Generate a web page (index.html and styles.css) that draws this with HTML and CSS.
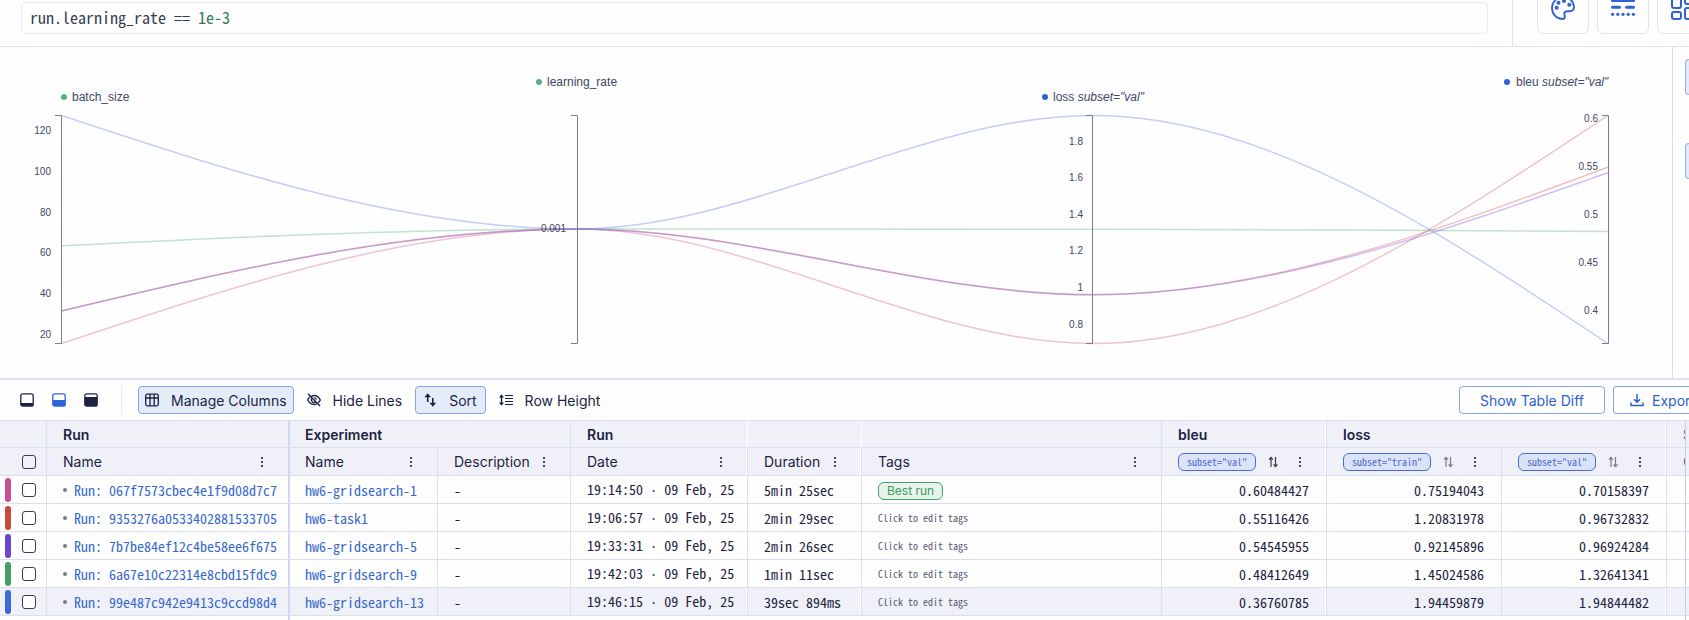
FILE: index.html
```html
<!DOCTYPE html>
<html lang="en">
<head>
<meta charset="utf-8">
<title>Metrics Explorer</title>
<link rel="stylesheet" href="styles.css">
</head>
<body>
<svg class="sprite" aria-hidden="true">
  <symbol id="dots" viewBox="0 0 4 12"><circle cx="2" cy="2" r="1.1"/><circle cx="2" cy="6" r="1.1"/><circle cx="2" cy="10" r="1.1"/></symbol>
  <symbol id="order" viewBox="0 0 10 12"><path d="M3 11V1.5M1 3.700 3 1.500 5 3.700M7.500 1v9.500M5.500 8.300l2 2.200 2-2.200" fill="none" stroke="currentColor" stroke-width="1.2"/></symbol>
</svg>
<main class="explorer">
  <header class="query">
    <div class="query-box"><div class="editor"><span>run.learning_rate == </span><span class="number">1e-3</span></div></div>
    <nav class="modes" aria-label="View controls">
      <button class="mode" aria-label="Colors"><svg viewBox="0 0 24 24" width="24" height="24" fill="none" stroke="currentColor" stroke-width="1.9"><path d="M12 1C5.800 1 1 5.800 1 12s5 11 10.500 11c1.500 0 2.300-1.100 2.300-2.300 0-1.200-.5-1.800-.5-2.900 0-1.600 1.200-2.600 2.900-2.600h2.300c2.600 0 4.500-1.600 4.500-4.200C23 5 18 1 12 1z"/><g fill="currentColor" stroke="none"><circle cx="5.700" cy="11.700" r="2"/><circle cx="7.500" cy="6.700" r="2"/><circle cx="13" cy="5" r="2"/><circle cx="18.300" cy="8.700" r="2"/></g></svg></button>
      <button class="mode" aria-label="Stroke styles"><svg viewBox="0 0 24 24" width="24" height="24" fill="currentColor"><rect x="0" y="1" width="24" height="5" rx="1"/><rect x="0" y="9.800" width="10" height="3" rx="1.500"/><rect x="14" y="9.800" width="10" height="3" rx="1.500"/><circle cx="1.600" cy="18.300" r="1.600"/><circle cx="6.800" cy="18.300" r="1.600"/><circle cx="12" cy="18.300" r="1.600"/><circle cx="17.200" cy="18.300" r="1.600"/><circle cx="22.400" cy="18.300" r="1.600"/></svg></button>
      <button class="mode" aria-label="Facets"><svg viewBox="0 0 24 24" width="24" height="24" fill="none" stroke="currentColor" stroke-width="2"><rect x="1" y="1" width="9" height="11" rx="2"/><rect x="1" y="16" width="9" height="7" rx="2"/><rect x="14" y="1" width="9" height="7" rx="2"/><rect x="14" y="12" width="9" height="11" rx="2"/></svg></button>
    </nav>
  </header>

  <section class="visual">
    <div class="plot">
      <svg class="chart" viewBox="0 47 1672 331" role="img" aria-label="Parallel coordinates">
        <g class="lines">
          <path class="pink" d="M61.500 343.500C233.300 286.250 405.200 229 577 229C748.900 229 920.900 343.500 1093 343.500C1264.700 343.500 1436.300 229.500 1608 115.500"/>
          <path class="red" d="M61.500 310.900C233.300 270 405.200 229 577 229C748.900 229 920.900 294.900 1093 294.900C1264.700 294.900 1436.300 231 1608 167.100"/>
          <path class="green" d="M61.500 245.800C233.300 237.400 405.200 229 577 229C748.900 229 920.900 229.200 1093 229.200C1264.700 229.400 1436.300 230.400 1608 231.500"/>
          <path class="violet" d="M61.500 310.900C233.300 270 405.200 229 577 229C748.900 229 920.900 294.600 1093 294.600C1264.700 294.600 1436.300 233.600 1608 172.600"/>
          <path class="blue" d="M61.500 115.500C233.300 172.250 405.200 229 577 229C748.900 229 920.900 115.500 1093 115.500C1264.700 115.500 1436.300 229.500 1608 343.500"/>
        </g>
        <g class="axes">
          <path d="M55 115.500h6.500v228H55"/><path d="M571 115.500h6.500v228H571"/><path d="M1086 115.500h6.500v228H1086"/><path d="M1602 115.500h6.500v228H1602"/>
        </g>
        <g class="ticks">
          <text x="51" y="134">120</text><text x="51" y="175">100</text><text x="51" y="216">80</text><text x="51" y="256">60</text><text x="51" y="297">40</text><text x="51" y="338">20</text>
          <text x="566" y="232">0.001</text>
          <text x="1083" y="145">1.8</text><text x="1083" y="181">1.6</text><text x="1083" y="218">1.4</text><text x="1083" y="254">1.2</text><text x="1083" y="291">1</text><text x="1083" y="328">0.8</text>
          <text x="1598" y="122">0.6</text><text x="1598" y="170">0.55</text><text x="1598" y="218">0.5</text><text x="1598" y="266">0.45</text><text x="1598" y="314">0.4</text>
        </g>
        <g class="names">
          <circle class="param" cx="64" cy="97" r="3"/><text x="72" y="101">batch_size</text>
          <circle class="param" cx="539" cy="82" r="3"/><text x="547" y="86">learning_rate</text>
          <circle class="metric" cx="1045" cy="97" r="3"/><text x="1053" y="101">loss <tspan class="context">subset="val"</tspan></text>
          <circle class="metric" cx="1507" cy="82" r="3"/><text x="1516" y="86">bleu <tspan class="context">subset="val"</tspan></text>
        </g>
      </svg>
    </div>
    <aside class="side"><button class="side-tab" aria-label="Curve interpolation"></button><button class="side-tab" aria-label="Color indicator"></button></aside>
  </section>

  <section class="panel">
    <div class="toolbar">
      <div class="sizes">
        <button class="size" aria-label="Small table"><svg viewBox="0 0 14 14" width="14" height="14"><rect x=".8" y=".8" width="12.400" height="12.400" rx="2" fill="none" stroke="currentColor" stroke-width="1.300"/><path d="M1 10h12v2l-1 1H2l-1-1z" fill="currentColor"/></svg></button>
        <button class="size current" aria-label="Medium table"><svg viewBox="0 0 14 14" width="14" height="14"><rect x=".8" y=".8" width="12.400" height="12.400" rx="2" fill="none" stroke="currentColor" stroke-width="1.300"/><path d="M1 7h12v5l-1 1H2l-1-1z" fill="currentColor"/></svg></button>
        <button class="size" aria-label="Large table"><svg viewBox="0 0 14 14" width="14" height="14"><rect x=".8" y=".8" width="12.400" height="12.400" rx="2" fill="none" stroke="currentColor" stroke-width="1.300"/><path d="M1 4h12v8l-1 1H2l-1-1z" fill="currentColor"/></svg></button>
      </div>
      <div class="tools">
        <button class="tool active"><svg viewBox="0 0 14 14" width="14" height="14" fill="none" stroke="currentColor" stroke-width="1.300"><rect x=".7" y="1.200" width="12.600" height="11.600" rx="1.500"/><path d="M.7 5h12.600M5 1.200v11.600M9.200 1.200v11.600"/></svg>Manage Columns</button>
        <button class="tool"><svg viewBox="0 0 14 14" width="14" height="14" fill="none" stroke="currentColor" stroke-width="1.400"><path d="M1 .8 13 13M4.500 3C5.300 2.600 6.100 2.500 7 2.500c3 0 5 2 6.300 4.500-.5 1-1.200 1.900-2 2.600M2.900 4C2 4.800 1.200 5.800.7 7 2 9.500 4 11.500 7 11.500c1 0 2-.3 2.800-.7M5.200 5.300a2.400 2.400 0 0 0 3.500 3.400M7.300 4.600a2.400 2.400 0 0 1 2 2.200"/></svg>Hide Lines</button>
        <button class="tool active sort"><svg viewBox="0 0 14 14" width="14" height="14" fill="currentColor"><path d="M4.700.2 8 4.200H5.500V9H3.900V4.200H1.400zM9.800 13.800 6.500 9.800H9V5h1.600v4.800h2.500z"/></svg>Sort</button>
        <button class="tool"><svg viewBox="0 0 14 14" width="14" height="14"><path d="M2.500 1.200 5 4.500H3.200v5H5l-2.500 3.300L0 9.500h1.800v-5H0z" fill="currentColor"/><path d="M6 2.500h8M6 5.500h8M6 8.500h8M6 11.500h8" fill="none" stroke="currentColor" stroke-width="1.200"/></svg>Row Height</button>
      </div>
      <div class="actions">
        <button class="action diff">Show Table Diff</button>
        <button class="action export"><svg viewBox="0 0 14 14" width="14" height="14" fill="none" stroke="currentColor" stroke-width="1.500"><path d="M7 1v8M4 6.200l3 3 3-3M1 9.500v3h12v-3"/></svg>Export</button>
      </div>
    </div>

    <table class="runs">
      <colgroup><col class="c-check"><col class="c-run"><col class="c-exp"><col class="c-desc"><col class="c-date"><col class="c-dur"><col><col class="c-metric"><col class="c-train"><col class="c-metric"><col class="c-next"><col class="c-pin"></colgroup>
      <thead>
        <tr class="groups"><th></th><th class="pinned">Run</th><th colspan="2" class="first">Experiment</th><th class="open">Run</th><th class="open"></th><th></th><th class="gap">bleu</th><th colspan="2" class="gap">loss</th><th>S</th><th class="edge"></th></tr>
        <tr class="fields">
          <th><input type="checkbox" aria-label="Select all runs"></th>
          <th class="pinned"><div class="field"><span>Name</span><button class="more" aria-label="Name menu"><svg><use href="#dots"/></svg></button></div></th>
          <th class="first"><div class="field"><span>Name</span><button class="more" aria-label="Experiment menu"><svg><use href="#dots"/></svg></button></div></th>
          <th><div class="field"><span>Description</span><button class="more" aria-label="Description menu"><svg><use href="#dots"/></svg></button></div></th>
          <th class="gap"><div class="field"><span>Date</span><button class="more" aria-label="Date menu"><svg><use href="#dots"/></svg></button></div></th>
          <th class="gap"><div class="field"><span>Duration</span><button class="more" aria-label="Duration menu"><svg><use href="#dots"/></svg></button></div></th>
          <th><div class="field"><span>Tags</span><button class="more" aria-label="Tags menu"><svg><use href="#dots"/></svg></button></div></th>
          <th class="gap"><div class="field"><span class="chip">subset="val"</span><button class="order on" aria-label="Sort bleu"><svg><use href="#order"/></svg></button><button class="more" aria-label="bleu menu"><svg><use href="#dots"/></svg></button></div></th>
          <th><div class="field"><span class="chip">subset="train"</span><button class="order" aria-label="Sort train loss"><svg><use href="#order"/></svg></button><button class="more" aria-label="Train loss menu"><svg><use href="#dots"/></svg></button></div></th>
          <th class="gap"><div class="field"><span class="chip">subset="val"</span><button class="order" aria-label="Sort val loss"><svg><use href="#order"/></svg></button><button class="more" aria-label="Val loss menu"><svg><use href="#dots"/></svg></button></div></th>
          <th>C</th><th class="edge"></th>
        </tr>
      </thead>
      <tbody>
        <tr><td class="pick pink"><input type="checkbox" aria-label="Select run 067f"></td><td class="pinned"><a class="run" href="#">Run: 067f7573cbec4e1f9d08d7c7</a></td><td class="first"><a href="#">hw6-gridsearch-1</a></td><td>-</td><td class="gap">19:14:50 <span class="sep">·</span> 09 Feb, 25</td><td class="gap">5min 25sec</td><td><span class="tag">Best run</span></td><td class="num gap">0.60484427</td><td class="num">0.75194043</td><td class="num gap">0.70158397</td><td></td><td class="edge"></td></tr>
        <tr><td class="pick red"><input type="checkbox" aria-label="Select run 9353"></td><td class="pinned"><a class="run" href="#">Run: 9353276a0533402881533705</a></td><td class="first"><a href="#">hw6-task1</a></td><td>-</td><td class="gap">19:06:57 <span class="sep">·</span> 09 Feb, 25</td><td class="gap">2min 29sec</td><td class="hint">Click to edit tags</td><td class="num gap">0.55116426</td><td class="num">1.20831978</td><td class="num gap">0.96732832</td><td></td><td class="edge"></td></tr>
        <tr><td class="pick violet"><input type="checkbox" aria-label="Select run 7b7b"></td><td class="pinned"><a class="run" href="#">Run: 7b7be84ef12c4be58ee6f675</a></td><td class="first"><a href="#">hw6-gridsearch-5</a></td><td>-</td><td class="gap">19:33:31 <span class="sep">·</span> 09 Feb, 25</td><td class="gap">2min 26sec</td><td class="hint">Click to edit tags</td><td class="num gap">0.54545955</td><td class="num">0.92145896</td><td class="num gap">0.96924284</td><td></td><td class="edge"></td></tr>
        <tr><td class="pick green"><input type="checkbox" aria-label="Select run 6a67"></td><td class="pinned"><a class="run" href="#">Run: 6a67e10c22314e8cbd15fdc9</a></td><td class="first"><a href="#">hw6-gridsearch-9</a></td><td>-</td><td class="gap">19:42:03 <span class="sep">·</span> 09 Feb, 25</td><td class="gap">1min 11sec</td><td class="hint">Click to edit tags</td><td class="num gap">0.48412649</td><td class="num">1.45024586</td><td class="num gap">1.32641341</td><td></td><td class="edge"></td></tr>
        <tr class="hover"><td class="pick blue"><input type="checkbox" aria-label="Select run 99e4"></td><td class="pinned"><a class="run" href="#">Run: 99e487c942e9413c9ccd98d4</a></td><td class="first"><a href="#">hw6-gridsearch-13</a></td><td>-</td><td class="gap">19:46:15 <span class="sep">·</span> 09 Feb, 25</td><td class="gap">39sec 894ms</td><td class="hint">Click to edit tags</td><td class="num gap">0.36760785</td><td class="num">1.94459879</td><td class="num gap">1.94844482</td><td></td><td class="edge"></td></tr>
        <tr class="rest"><td></td><td class="pinned"></td><td colspan="9"></td><td class="edge"></td></tr>
      </tbody>
    </table>
  </section>
</main>
</body>
</html>
```
FILE: styles.css
```css
* { box-sizing: border-box; }
body {
  margin: 0;
  overflow: hidden;
  background: #fefefe;
  color: #1c2340;
  font-family: Inter, "Liberation Sans", sans-serif;
  font-size: 14px;
}
button {
  border: 0;
  padding: 0;
  background: none;
  color: inherit;
  font: inherit;
  white-space: nowrap;
}
svg { flex: none; }
a { color: #3668cc; text-decoration: none; }
.sprite { display: none; }
.explorer { display: flex; flex-direction: column; min-height: 100vh; }

/* Query bar */
.query {
  display: flex;
  height: 47px;
  overflow: hidden;
  border-bottom: 1px solid #dde3f1;
}
.query-box { flex: 1; padding: 2px 24px 12px 21px; border-right: 1px solid #dde3f1; }
.editor {
  height: 32px;
  padding: 0 8px;
  border: 1px solid #e6eaf3;
  border-radius: 5px;
  line-height: 28px;
  font-family: "Noto Sans Mono CJK SC", "Noto Sans Mono CJK JP", "Liberation Mono", monospace;
  font-size: 16px;
  white-space: pre;
  color: #353b56;
}
.number { color: #2f7a4f; }
.modes {
  display: flex;
  align-items: flex-end;
  gap: 8px;
  width: 176px;
  padding: 0 0 12px 24px;
  overflow: hidden;
}
.mode {
  display: grid;
  flex: none;
  place-items: center;
  width: 52px;
  height: 52px;
  border: 1px solid #e0e5f2;
  border-radius: 6px;
  color: #2f63d0;
}

/* Chart */
.visual { display: flex; }
.plot { flex: 1; }
.chart { display: block; width: 100%; height: auto; font-family: "Liberation Sans", Arial, sans-serif; }
.lines path { fill: none; stroke-width: 1.5px; opacity: 0.36; }
.lines .blue { stroke: #6476f0; }
.lines .green { stroke: #57b27e; }
.lines .violet { stroke: #8050e8; }
.lines .red { stroke: #d8563f; }
.lines .pink { stroke: #d65a90; }
.axes path { fill: none; stroke: #7c7e8e; }
.ticks text { font-size: 10px; text-anchor: end; fill: #414763; }
.names text { font-size: 12px; fill: #414763; }
.context { font-style: italic; }
.param { fill: #56b17e; }
.metric { fill: #2e62d9; }
.side {
  display: flex;
  flex-direction: column;
  gap: 48px;
  width: 17px;
  padding: 12px 0 0 12px;
  border-left: 1px solid #d5ddf0;
}
.side-tab {
  height: 36px;
  border: 1px solid #8db1e4;
  border-right: 0;
  border-radius: 6px 0 0 6px;
  background: #e4ecf9;
}

/* Toolbar */
.panel { display: flex; flex: 1; flex-direction: column; border-top: 2px solid #dbe1f1; }
.toolbar { display: flex; align-items: center; height: 40px; padding-left: 20px; overflow: hidden; }
.sizes { display: flex; gap: 18px; padding-right: 23px; border-right: 1px solid #e4e8f3; line-height: 28px; }
.size { display: grid; align-items: center; height: 28px; }
.current { color: #2e62d9; }
.tools { display: flex; flex: 1; gap: 6px; padding-left: 16px; }
.tool {
  display: flex;
  align-items: center;
  gap: 12px;
  height: 28px;
  padding: 0 6px;
  border: 1px solid transparent;
  border-radius: 4px;
}
.sort { padding: 0 8px 0 7px; }
.active { border-color: #7fa9e4; background: #e4ecf9; }
.actions { display: flex; flex: none; gap: 8px; }
.action {
  display: flex;
  align-items: center;
  justify-content: center;
  gap: 8px;
  height: 28px;
  border: 1px solid #83a7e6;
  border-radius: 4px;
  color: #2e62c8;
  overflow: hidden;
}
.diff { padding: 0 20px; }
.export { justify-content: flex-start; width: 76px; padding-left: 16px; border-right: 0; border-radius: 4px 0 0 4px; }

/* Runs table */
.runs { width: 100%; table-layout: fixed; border-collapse: separate; border-spacing: 0; }
.c-check { width: 47px; }
.c-run { width: 243px; }
.c-exp { width: 148px; }
.c-desc { width: 133px; }
.c-date { width: 177px; }
.c-dur { width: 114px; }
.c-metric { width: 165px; }
.c-train { width: 175px; }
.c-next { width: 18px; }
.c-pin { width: 4px; }
.runs th, .runs td {
  height: 28px;
  padding: 0 15px 0 16px;
  border-right: 1px solid #d9dff0;
  border-bottom: 1px solid #d9dff0;
  text-align: left;
  white-space: nowrap;
  overflow: hidden;
}
.runs th { background: #f0f1f8; font-weight: 400; }
.runs .groups th { border-top: 1px solid #d9dff0; font-weight: 600; }
.runs .first { padding: 0 15px; }
.runs .groups .open { border-right-color: #fff; }
.runs .gap { box-shadow: inset -1px 0 #fff; }
.runs .pinned { border-right: 2px solid #cdd8f2; }
.runs td.pinned { padding-right: 8px; }
.runs .edge { padding: 0; border-left: 1px solid #c3cdf0; border-right: 0; }
.runs th:nth-last-child(2) { padding-right: 0; border-right: 0; color: #666b80; }
.runs td:nth-last-child(2) { border-right: 0; }
.runs td {
  font-family: "Noto Sans Mono CJK SC", "Noto Sans Mono CJK JP", "Liberation Mono", monospace;
  line-height: 20px;
}
.sep { font-family: "Liberation Mono", monospace; font-size: 12px; line-height: 16px; }
.runs .hover td { background: #f0f1f8; }
.runs .rest td { height: 6px; border-bottom: 0; border-right-color: transparent; }
.runs .rest .pinned { border-right-color: #cdd8f2; }
.runs th:first-child, .runs td:first-child { padding: 0 10px 0 22px; }
input[type="checkbox"] {
  display: block;
  width: 14px;
  height: 14px;
  margin: 0;
  appearance: none;
  border: 1px solid #353b56;
  border-radius: 3px;
  background: #fff;
}
th input[type="checkbox"] { background: transparent; }
.runs td.pick { padding: 1px 10px 1px 5px; }
.pick::before {
  content: "";
  float: left;
  width: 6px;
  height: 24px;
  margin-right: 11px;
  border-radius: 3px;
}
.pick input[type="checkbox"] { margin-top: 5px; }
.pick.pink::before { background: #c94f92; }
.pick.red::before { background: #c64a3d; }
.pick.violet::before { background: #6a45d0; }
.pick.green::before { background: #459e63; }
.pick.blue::before { background: #3d66d8; }
.run { display: flex; align-items: center; gap: 7px; }
.run::before { content: ""; flex: none; width: 4px; height: 4px; border-radius: 50%; background: #777d90; }
.runs .num { padding-right: 17px; text-align: right; }
.runs .hint { font-size: 10px; line-height: 16px; color: #555b75; }
.field { display: flex; align-items: center; }
.field span:first-child { margin-right: auto; }
.more, .order { display: grid; flex: none; }
.more { margin-right: 9px; }
.more svg { width: 4px; height: 12px; fill: #1c2340; }
.order { margin-right: 20px; color: #777b8c; }
.on { color: #353b50; }
.order svg { width: 10px; height: 12px; }
.chip {
  padding: 0 8px;
  border: 1px solid #4b6bd3;
  border-radius: 6px;
  background: #dbe3f8;
  color: #4a68c8;
  font-family: "Noto Sans Mono CJK SC", "Noto Sans Mono CJK JP", "Liberation Mono", monospace;
  font-size: 10px;
  line-height: 16px;
}
.tag {
  display: inline-block;
  padding: 0 8px;
  border: 1px solid #4a9e68;
  border-radius: 6px;
  background: #e6f4eb;
  color: #3f9a60;
  font-family: Inter, sans-serif;
  font-size: 12px;
  line-height: 16px;
  vertical-align: middle;
}
```
